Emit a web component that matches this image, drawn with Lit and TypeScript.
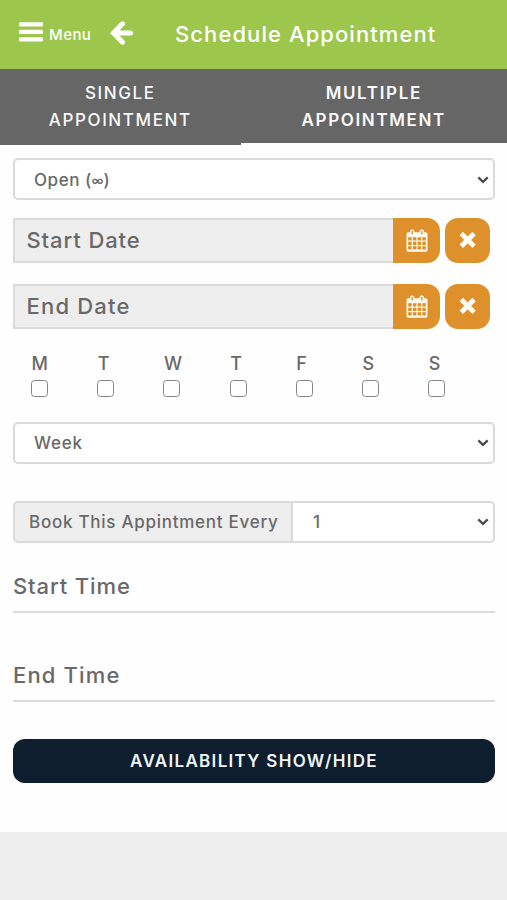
import { LitElement, html, css, svg } from "lit";
import { customElement } from "lit/decorators.js";

const chevron = html`<svg class="chevron" width="12" height="8" viewBox="0 0 12 8">
  <path d="M1.3 1.3 L6 5.8 L10.7 1.3" fill="none" stroke="#4c4c4c" stroke-width="2.3" />
</svg>`;

const cells = [0, 1, 2, 3].flatMap((c) =>
  [0, 1, 2].map((r) => svg`<rect x=${2.2 + c * 4.7} y=${8.2 + r * 4.5} width="3.5" height="3.3" fill="#de912b" />`)
);

const calendar = html`<svg width="22" height="23" viewBox="0 0 22 23">
  <rect x="0.5" y="3.2" width="21" height="19.6" rx="1.8" fill="#fffaf0" />
  ${cells}
  <rect x="4" y="0.4" width="4.4" height="6.4" rx="2.1" fill="#fffaf0" />
  <rect x="13.6" y="0.4" width="4.4" height="6.4" rx="2.1" fill="#fffaf0" />
  <rect x="5.5" y="1.8" width="1.4" height="3.8" rx="0.7" fill="#de912b" />
  <rect x="15.1" y="1.8" width="1.4" height="3.8" rx="0.7" fill="#de912b" />
</svg>`;

const cross = html`<svg width="18" height="18" viewBox="0 0 18 18">
  <path d="M4 4.2 L13.4 13.6 M13.4 4.2 L4 13.6" stroke="#fffdf8" stroke-width="4.8" stroke-linecap="square" stroke-linejoin="round" />
</svg>`;

@customElement("app-root")
export class AppRoot extends LitElement {
  static styles = css`
    * { box-sizing: border-box; }
    :host {
      display: block;
      height: 900px;
      background: #eee;
      font-family: Inter, "Liberation Sans", sans-serif;
      font-weight: 460;
      color: #696969;
      white-space: nowrap;
    }
    svg { display: block; flex: none; }
    .page { height: 832px; background: #fefefe; }
    .header { height: 69px; background: #9cc64c; color: #fff; display: flex; align-items: center; padding-left: 19px; }
    .bars { margin-bottom: 6px; }
    .menu { font-size: 15px; letter-spacing: 0.45px; margin: 0 0 0 6px; width: 61px; }
    .back { margin-bottom: 4px; }
    .title { font-size: 22px; font-weight: 500; letter-spacing: 1.08px; margin: 0 0 2px 42px; }
    .tabs { display: grid; grid-template-columns: 240.5px 1fr; height: 76px; background: #666; color: #fafafa; }
    .tab { display: flex; flex-direction: column; align-items: center; padding-top: 11px; font-size: 17px; line-height: 27px; letter-spacing: 1.6px; }
    .tab.active { border-bottom: 2.5px solid #fff; font-weight: 600; letter-spacing: 1.65px; }
    .form { padding: 13px 12px 0 13px; display: flex; flex-direction: column; }
    .select { height: 42px; border: 2px solid #dadada; border-radius: 5px; background: #fff; display: flex; align-items: center; justify-content: space-between; padding: 0 4.5px 0 19px; font-size: 17px; letter-spacing: 0.75px; }
    .open { letter-spacing: 0.55px; padding-top: 1px; }
    .infinity { font-size: 12px; font-weight: 600; letter-spacing: 0; vertical-align: 1px; }
    .date { display: flex; height: 45px; margin-top: 18px; }
    .date + .date { margin-top: 21px; }
    .field { width: 380px; border: 2px solid #dadada; border-right: 0; background: #eee; padding: 0 0 2px 11.5px; font-size: 22px; letter-spacing: 0.9px; display: flex; align-items: center; }
    .date + .date .field { letter-spacing: 1.2px; }
    .btn { background: #de912b; display: flex; align-items: center; justify-content: center; }
    .cal { width: 46.5px; border-radius: 0 13px 13px 0; padding: 0 0 1px 2px; }
    .clear { width: 45px; border-radius: 13px; margin-left: 5.5px; padding: 0 0 1px; }
    .days { display: grid; grid-template-columns: repeat(7, 66.2px); padding-left: 18px; margin-top: 24px; height: 44px; }
    .day { font-size: 18px; line-height: 22px; }
    .letter { margin-left: 0.6px; }
    .box { width: 17px; height: 17px; border: 1.5px solid #858585; border-radius: 3.5px; margin-top: 5px; background: #fff; }
    .week { margin-top: 25px; }
    .group { display: flex; margin-top: 37px; height: 42px; }
    .addon { width: 280px; border: 2px solid #dadada; border-radius: 5px 0 0 5px; background: #eee; display: flex; align-items: center; padding-left: 14px; font-size: 17px; letter-spacing: 0.74px; }
    .group .select { flex: 1; border-left: 0; border-radius: 0 5px 5px 0; padding-left: 20px; }
    .time { height: 48px; border-bottom: 2px solid #dcdcdc; font-size: 22px; line-height: 28px; letter-spacing: 0.88px; padding-top: 7px; }
    .start { margin-top: 22px; }
    .end { margin-top: 41px; letter-spacing: 1.15px; }
    .toggle { margin-top: 37px; height: 44px; border-radius: 12px; background: #0e1e2e; color: #edf6fa; display: flex; align-items: center; justify-content: center; font-size: 17px; font-weight: 600; letter-spacing: 1.3px; }
  `;

  dateRow(label: string) {
    return html`<div class="date">
      <div class="field"><span>${label}</span></div>
      <div class="btn cal">${calendar}</div>
      <div class="btn clear">${cross}</div>
    </div>`;
  }

  render() {
    return html`
      <div class="page">
        <div class="header">
          <svg class="bars" width="24" height="20" viewBox="0 0 24 20" fill="#fff">
            <rect y="0.2" width="24" height="4.2" rx="1.2" /><rect y="7.7" width="24" height="4.2" rx="1.2" /><rect y="15.2" width="24" height="4.2" rx="1.2" />
          </svg>
          <div class="menu"><span>Menu</span></div>
          <svg class="back" width="23" height="24" viewBox="0 0 23 24">
            <path d="M12.5 2.8 L3.4 12 L12.5 21.2 M4 12 H20.5" fill="none" stroke="#fff" stroke-width="5" stroke-linecap="round" />
          </svg>
          <div class="title"><span>Schedule Appointment</span></div>
        </div>
        <div class="tabs">
          <div class="tab"><span>SINGLE</span><span>APPOINTMENT</span></div>
          <div class="tab active"><span>MULTIPLE</span><span>APPOINTMENT</span></div>
        </div>
        <div class="form">
          <div class="select open"><span>Open (<span class="infinity">∞</span>)</span>${chevron}</div>
          ${this.dateRow("Start Date")} ${this.dateRow("End Date")}
          <div class="days">
            ${["M", "T", "W", "T", "F", "S", "S"].map((d) => html`<div class="day"><span class="letter">${d}</span><div class="box"></div></div>`)}
          </div>
          <div class="select week"><span>Week</span>${chevron}</div>
          <div class="group">
            <div class="addon"><span>Book This Appintment Every</span></div>
            <div class="select one"><span>1</span>${chevron}</div>
          </div>
          <div class="time start"><span>Start Time</span></div>
          <div class="time end"><span>End Time</span></div>
          <div class="toggle"><span>AVAILABILITY SHOW/HIDE</span></div>
        </div>
      </div>
    `;
  }
}
